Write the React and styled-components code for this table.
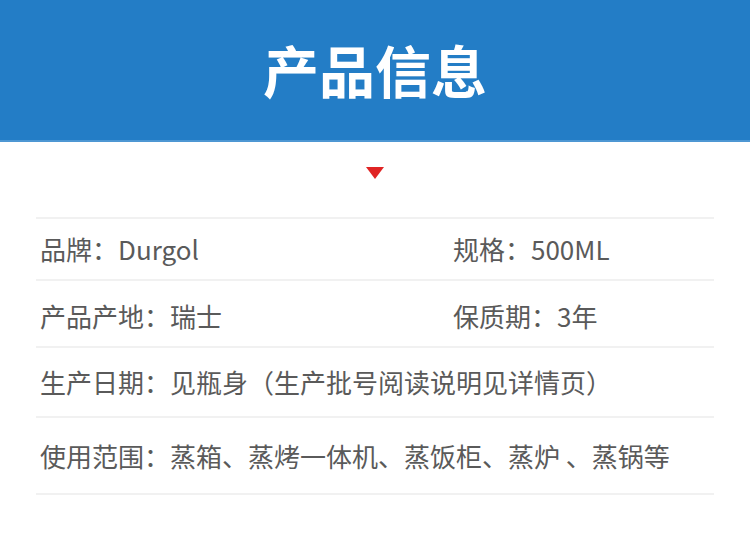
import React from 'react';
import styled, { createGlobalStyle } from 'styled-components';

const GlobalStyle = createGlobalStyle`
  html, body {
    margin: 0;
    padding: 0;
    background: #fff;
  }
  body {
    font-family: "Noto Sans CJK SC", "Noto Sans", sans-serif;
  }
`;

const Page = styled.div`
  width: 750px;
  height: 555px;
  overflow: hidden;
  background: #fff;
`;

const Banner = styled.header`
  height: 140px;
  background-color: #237dc6;
  border-bottom: 2px solid #4d97d3;
  display: flex;
  align-items: center;
  justify-content: center;
`;

const Title = styled.h1`
  margin: -2px 0 0;
  color: #fff;
  font-size: 56px;
  font-weight: 700;
  line-height: 1;
  letter-spacing: 0;
`;

const Arrow = styled.div`
  width: 0;
  height: 0;
  margin: 25px auto 38px;
  border-left: 9px solid transparent;
  border-right: 9px solid transparent;
  border-top: 12px solid #e02424;
`;

const List = styled.div`
  margin: 0 36px;
  border-bottom: 2px solid #f1f1f1;
`;

const Row = styled.div`
  display: grid;
  grid-template-columns: ${p => (p.$single ? '1fr' : '413px 1fr')};
  align-items: center;
  box-sizing: border-box;
  height: ${p => p.$h}px;
  padding: ${p => p.$pt || 0}px 0 0 4px;
  border-top: 2px solid #f1f1f1;
`;

const Cell = styled.div`
  color: #5a5a5a;
  font-size: 26px;
  font-weight: 400;
  line-height: 1;
  white-space: nowrap;
`;

const rows = [
  { h: 62, cells: ['品牌：Durgol', '规格：500ML'] },
  { h: 67, pt: 4, cells: ['产品产地：瑞士', '保质期：3年'] },
  { h: 70, cells: ['生产日期：见瓶身（生产批号阅读说明见详情页）'] },
  { h: 77, cells: ['使用范围：蒸箱、蒸烤一体机、蒸饭柜、蒸炉 、蒸锅等'] },
];

const App = () => {
  return (
    <>
      <GlobalStyle />
      <Page>
        <Banner>
          <Title>产品信息</Title>
        </Banner>
        <Arrow />
        <List>
          {rows.map((r, i) => (
            <Row key={i} $h={r.h} $pt={r.pt} $single={r.cells.length === 1}>
              {r.cells.map((c, j) => (
                <Cell key={j}>{c}</Cell>
              ))}
            </Row>
          ))}
        </List>
      </Page>
    </>
  );
};

export default App;
